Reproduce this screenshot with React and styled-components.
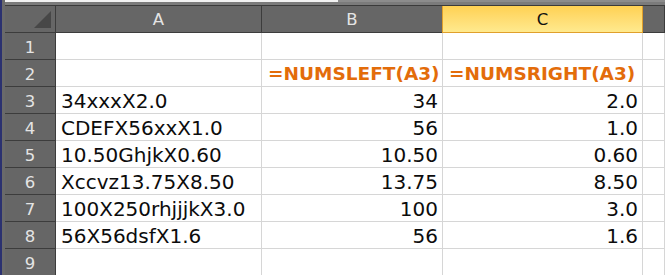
import React from 'react'
import styled, { createGlobalStyle, css } from 'styled-components'

const Global = createGlobalStyle`
  html, body {
    margin: 0;
    padding: 0;
    background: #ffffff;
    overflow: hidden;
  }
`

const Window = styled.div`
  display: flex;
  width: 665px;
  height: 275px;
  overflow: hidden;
  font-family: 'DejaVu Sans', Verdana, sans-serif;
`

const Edge = styled.div`
  flex: 0 0 5px;
  background: linear-gradient(to right, #2b3170 0, #2b3170 2px, #6a6a6a 2px);
`

const Main = styled.div`
  flex: 1;
  display: flex;
  flex-direction: column;
  min-width: 0;
`

const TopStrip = styled.div`
  height: 6px;
  flex: 0 0 6px;
  box-sizing: border-box;
  border-bottom: 1px solid #3a3a3a;
  background: linear-gradient(to bottom, #f2f2f2 0, #f2f2f2 2px, #7b7b7b 2px);
  position: relative;
  &::after {
    content: '';
    position: absolute;
    left: 333px;
    right: 0;
    top: 0;
    height: 2px;
    background: #8c8c8c;
  }
`

const Grid = styled.div`
  display: grid;
  grid-template-columns: 51px 206px 181px 200px 1fr;
  grid-auto-rows: 27px;
`

const headerBase = css`
  box-sizing: border-box;
  background: #666666;
  border-right: 1px solid #3c3c3c;
  border-bottom: 1px solid #3c3c3c;
  color: #e4e4e4;
  font-size: 16.5px;
  display: flex;
  align-items: center;
  justify-content: center;
`

const Corner = styled.div`
  ${headerBase}
  position: relative;
  &::after {
    content: '';
    position: absolute;
    right: 4px;
    bottom: 4px;
    width: 0;
    height: 0;
    border-left: 17px solid transparent;
    border-bottom: 17px solid #474747;
  }
`

const ColHead = styled.div`
  ${headerBase}
  padding-top: 1px;
  ${({ $active }) =>
    $active &&
    css`
      background: linear-gradient(to bottom, #ffd153 0%, #ffdd72 50%, #ffea8e 100%);
      color: #111111;
      border-left: 1px solid #e0a02c;
      border-right: 1px solid #e0a02c;
      border-bottom: 1px solid #e0a02c;
      margin-left: -1px;
    `}
`

const RowHead = styled.div`
  ${headerBase}
  padding-top: 2px;
`

const Cell = styled.div`
  box-sizing: border-box;
  border-right: 1px solid #d6d6d6;
  border-bottom: 1px solid #d6d6d6;
  padding: 2px 4px 0 5px;
  font-size: 20px;
  line-height: 24px;
  color: #0c0c0c;
  white-space: nowrap;
  overflow: visible;
  text-align: ${({ $align }) => $align || 'left'};
  ${({ $formula }) =>
    $formula &&
    css`
      color: #e36c0a;
      font-weight: bold;
      font-size: 18.5px;
      padding-left: 6px;
      text-align: left;
    `}
`

const rows = [
  ['', '', ''],
  ['', '=NUMSLEFT(A3)', '=NUMSRIGHT(A3)'],
  ['34xxxX2.0', '34', '2.0'],
  ['CDEFX56xxX1.0', '56', '1.0'],
  ['10.50GhjkX0.60', '10.50', '0.60'],
  ['Xccvz13.75X8.50', '13.75', '8.50'],
  ['100X250rhjjjkX3.0', '100', '3.0'],
  ['56X56dsfX1.6', '56', '1.6'],
  ['', '', ''],
]

const App = () => (
  <>
    <Global />
    <Window>
      <Edge />
      <Main>
        <TopStrip />
        <Grid>
          <Corner />
          <ColHead>A</ColHead>
          <ColHead>B</ColHead>
          <ColHead $active>C</ColHead>
          <ColHead />
          {rows.map((r, i) => (
            <React.Fragment key={i}>
              <RowHead>{i + 1}</RowHead>
              <Cell>{r[0]}</Cell>
              <Cell $align="right" $formula={i === 1}>
                {r[1]}
              </Cell>
              <Cell $align="right" $formula={i === 1}>
                {r[2]}
              </Cell>
              <Cell />
            </React.Fragment>
          ))}
        </Grid>
      </Main>
    </Window>
  </>
)

export default App
